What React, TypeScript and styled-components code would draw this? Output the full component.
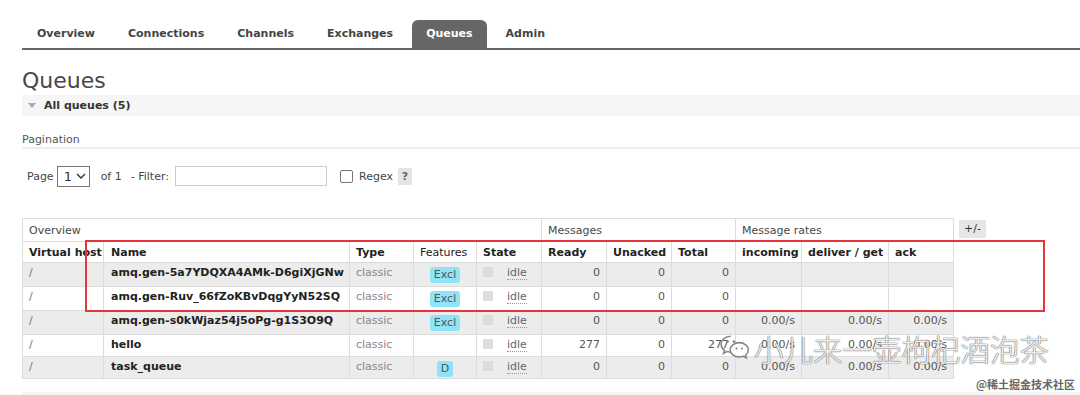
import React from "react";
import styled, { createGlobalStyle } from "styled-components";

const GlobalStyle = createGlobalStyle`
  body {
    margin: 0;
    background: #fff;
    font-family: "DejaVu Sans", Verdana, sans-serif;
    font-size: 11px;
    color: #484848;
  }
`;

const Page = styled.div`
  position: relative;
  width: 1080px;
  height: 395px;
  overflow: hidden;
  padding-left: 22px;
  box-sizing: border-box;
`;

const TabBar = styled.ul`
  display: flex;
  list-style: none;
  margin: 20px 0 0;
  padding: 0;
  border-bottom: 2px solid #666;
  height: 28px;
`;

const Tab = styled.li<{ $active?: boolean }>`
  margin: 0 2.5px;
  padding: 0 14px;
  line-height: 28px;
  font-weight: bold;
  font-size: 11px;
  color: ${(p) => (p.$active ? "#fff" : "#444")};
  background: ${(p) => (p.$active ? "#666" : "transparent")};
  border-radius: 6px 6px 0 0;
  &:first-child {
    margin-left: 1px;
  }
`;

const Title = styled.h1`
  margin: 17px 0 0;
  font-size: 22px;
  line-height: 27px;
  font-weight: normal;
  color: #484848;
`;

const SectionBar = styled.div`
  display: flex;
  align-items: center;
  gap: 8px;
  height: 21px;
  margin-top: 1px;
  padding-left: 6px;
  background: #f6f6f6;
  font-weight: bold;
  color: #333;
`;

const Triangle = styled.span`
  width: 0;
  height: 0;
  border-left: 4px solid transparent;
  border-right: 4px solid transparent;
  border-top: 5px solid #aaa;
`;

const SubHeading = styled.div`
  margin-top: 17px;
  line-height: 14px;
  color: #555;
  border-bottom: 2px solid #eee;
`;

const PagerRow = styled.div`
  display: flex;
  align-items: center;
  height: 22px;
  margin-top: 16px;
  padding-left: 5px;
  color: #444;
`;

const Label = styled.span<{ $ml?: number }>`
  margin-left: ${(p) => p.$ml ?? 0}px;
`;

const FakeSelect = styled.div`
  display: flex;
  align-items: center;
  gap: 4px;
  margin-left: 3px;
  width: 33px;
  height: 21px;
  box-sizing: border-box;
  padding-left: 6px;
  border: 1px solid #777;
  font-size: 13px;
  color: #333;
`;

const FilterInput = styled.div`
  margin-left: 6px;
  width: 152px;
  height: 20px;
  box-sizing: border-box;
  border: 1px solid #ccc;
`;

const Checkbox = styled.span`
  margin-left: 13px;
  width: 13px;
  height: 13px;
  box-sizing: border-box;
  border: 1px solid #777;
  border-radius: 2px;
`;

const Help = styled.span`
  margin-left: 5px;
  width: 14px;
  height: 17px;
  line-height: 17px;
  text-align: center;
  background: #e4e4e4;
  color: #666;
  font-weight: bold;
`;

const TableArea = styled.div`
  position: relative;
  display: flex;
  align-items: flex-start;
  gap: 5px;
  margin-top: 31px;
`;

const Grid = styled.table`
  border-collapse: collapse;
  table-layout: fixed;
  width: 931px;
  font-size: 11px;
`;

const GroupHead = styled.th`
  height: 22px;
  padding: 0 6px;
  text-align: left;
  font-weight: normal;
  color: #484848;
  border: 1px solid #ddd;
`;

const ColHead = styled.th<{ $plain?: boolean; $pl?: number }>`
  height: 20px;
  padding: 0 6px 0 ${(p) => p.$pl ?? 6}px;
  text-align: left;
  font-weight: ${(p) => (p.$plain ? "normal" : "bold")};
  color: #222;
  white-space: nowrap;
  overflow: hidden;
  border: 1px solid #ddd;
`;

const Row = styled.tr<{ $alt?: boolean; $tall?: boolean }>`
  background: ${(p) => (p.$alt ? "#ececec" : "#fff")};
  td {
    height: ${(p) => (p.$tall ? 24 : 22)}px;
  }
`;

const Cell = styled.td<{ $align?: "left" | "right" | "center"; $tone?: string; $bold?: boolean; $pl?: number }>`
  padding: 3px 6px 0 ${(p) => p.$pl ?? 6}px;
  vertical-align: top;
  line-height: 14px;
  text-align: ${(p) => p.$align ?? "left"};
  color: ${(p) => p.$tone ?? "#555"};
  font-weight: ${(p) => (p.$bold ? "bold" : "normal")};
  white-space: nowrap;
  overflow: hidden;
  border: 1px solid #dcdcdc;
  box-sizing: border-box;
`;

const Badge = styled.span`
  display: inline-block;
  padding: 1px 4px;
  margin-top: 1px;
  line-height: 14px;
  border-radius: 3px;
  background: #8fe4f8;
  color: #555;
`;

const StateBox = styled.span`
  display: inline-block;
  width: 10px;
  height: 10px;
  margin-top: 1px;
  vertical-align: top;
  background: #ddd;
`;

const Idle = styled.span`
  margin-left: 14px;
  color: #666;
  border-bottom: 1px dotted #999;
`;

const Toggle = styled.span`
  margin-top: 2px;
  padding: 0 5px;
  line-height: 18px;
  background: #e6e6e6;
  color: #333;
`;

const Highlight = styled.div`
  position: absolute;
  left: 63px;
  top: 22px;
  width: 960px;
  height: 72px;
  box-sizing: border-box;
  border: 2px solid #e8343c;
  pointer-events: none;
`;

const FooterBar = styled.div`
  margin-top: 13px;
  height: 20px;
  background: #f6f6f6;
`;

const Watermark = styled.div`
  position: absolute;
  left: 719px;
  top: 327px;
  display: flex;
  align-items: center;
  gap: 3px;
  font-family: "Noto Sans CJK SC", sans-serif;
  font-size: 29.5px;
  font-weight: 300;
  color: rgba(255, 255, 255, 0.9);
  text-shadow: 0 0 1px #777, 0 0 1px #777, 0 0 1px #777;
  white-space: nowrap;
`;

const Credit = styled.div`
  position: absolute;
  right: 5px;
  top: 376px;
  font-family: "Noto Sans CJK SC", sans-serif;
  font-size: 11px;
  font-weight: bold;
  color: #666;
`;

type Queue = {
  name: string;
  feature?: string;
  ready: number;
  unacked: number;
  total: number;
  rates: boolean;
  tall: boolean;
};

const queues: Queue[] = [
  { name: "amq.gen-5a7YDQXA4AMk-D6giXjGNw", feature: "Excl", ready: 0, unacked: 0, total: 0, rates: false, tall: true },
  { name: "amq.gen-Ruv_66fZoKBvDqgYyN52SQ", feature: "Excl", ready: 0, unacked: 0, total: 0, rates: false, tall: true },
  { name: "amq.gen-s0kWjaz54j5oPg-g1S3O9Q", feature: "Excl", ready: 0, unacked: 0, total: 0, rates: true, tall: true },
  { name: "hello", ready: 277, unacked: 0, total: 277, rates: true, tall: false },
  { name: "task_queue", feature: "D", ready: 0, unacked: 0, total: 0, rates: true, tall: false },
];

const widths = [81, 246, 64, 63, 65, 65, 65, 64, 66, 87, 65];

const WeChatIcon = () => (
  <svg width="32" height="30" viewBox="0 0 30 28">
    <path
      d="M11 3C5.5 3 2 6.6 2 10.5c0 2.3 1.2 4.2 3.1 5.6L4.3 19l3.2-1.7c1.1.3 2.3.5 3.5.5"
      fill="none"
      stroke="#888"
      strokeWidth="1.5"
    />
    <path
      d="M19 9c4.8 0 8.5 3 8.5 6.8 0 2-1 3.7-2.6 4.9l.7 2.5-2.8-1.5c-1.2.4-2.4.6-3.8.6-4.8 0-8.5-3-8.5-6.5S14.2 9 19 9z"
      fill="rgba(255,255,255,0.9)"
      stroke="#888"
      strokeWidth="1.5"
    />
    <circle cx="8" cy="8" r="1.2" fill="#888" />
    <circle cx="14" cy="8" r="1.2" fill="#888" />
    <circle cx="16.5" cy="14.5" r="1" fill="#888" />
    <circle cx="21.5" cy="14.5" r="1" fill="#888" />
  </svg>
);

export default function App() {
  return (
    <>
      <GlobalStyle />
      <Page>
        <TabBar>
          <Tab>Overview</Tab>
          <Tab>Connections</Tab>
          <Tab>Channels</Tab>
          <Tab>Exchanges</Tab>
          <Tab $active>Queues</Tab>
          <Tab>Admin</Tab>
        </TabBar>

        <Title>Queues</Title>
        <SectionBar>
          <Triangle />
          All queues (5)
        </SectionBar>

        <SubHeading>Pagination</SubHeading>
        <PagerRow>
          <Label>Page</Label>
          <FakeSelect>
            1
            <svg width="10" height="7" viewBox="0 0 10 7">
              <path d="M1 1l4 4 4-4" fill="none" stroke="#333" strokeWidth="1.4" />
            </svg>
          </FakeSelect>
          <Label $ml={11}>of 1</Label>
          <Label $ml={9}>- Filter:</Label>
          <FilterInput />
          <Checkbox />
          <Label $ml={6}>Regex</Label>
          <Help>?</Help>
        </PagerRow>

        <TableArea>
          <Grid>
            <colgroup>
              {widths.map((w, i) => (
                <col key={i} style={{ width: w }} />
              ))}
            </colgroup>
            <thead>
              <tr>
                <GroupHead colSpan={5}>Overview</GroupHead>
                <GroupHead colSpan={3}>Messages</GroupHead>
                <GroupHead colSpan={3}>Message rates</GroupHead>
              </tr>
              <tr>
                <ColHead>Virtual host</ColHead>
                <ColHead $pl={7}>Name</ColHead>
                <ColHead>Type</ColHead>
                <ColHead $plain>Features</ColHead>
                <ColHead>State</ColHead>
                <ColHead>Ready</ColHead>
                <ColHead>Unacked</ColHead>
                <ColHead>Total</ColHead>
                <ColHead>incoming</ColHead>
                <ColHead>deliver / get</ColHead>
                <ColHead>ack</ColHead>
              </tr>
            </thead>
            <tbody>
              {queues.map((q, i) => (
                <Row key={q.name} $alt={i % 2 === 0} $tall={q.tall}>
                  <Cell $tone="#777">/</Cell>
                  <Cell $bold $tone="#222" $pl={7}>
                    {q.name}
                  </Cell>
                  <Cell $tone="#888">classic</Cell>
                  <Cell $align="center">{q.feature && <Badge>{q.feature}</Badge>}</Cell>
                  <Cell>
                    <StateBox />
                    <Idle>idle</Idle>
                  </Cell>
                  <Cell $align="right">{q.ready}</Cell>
                  <Cell $align="right">{q.unacked}</Cell>
                  <Cell $align="right">{q.total}</Cell>
                  <Cell $align="right">{q.rates ? "0.00/s" : ""}</Cell>
                  <Cell $align="right">{q.rates ? "0.00/s" : ""}</Cell>
                  <Cell $align="right">{q.rates ? "0.00/s" : ""}</Cell>
                </Row>
              ))}
            </tbody>
          </Grid>
          <Toggle>+/-</Toggle>
          <Highlight />
        </TableArea>

        <FooterBar />

        <Watermark>
          <WeChatIcon />
          小儿来一壶枸杞酒泡茶
        </Watermark>
        <Credit>@稀土掘金技术社区</Credit>
      </Page>
    </>
  );
}
